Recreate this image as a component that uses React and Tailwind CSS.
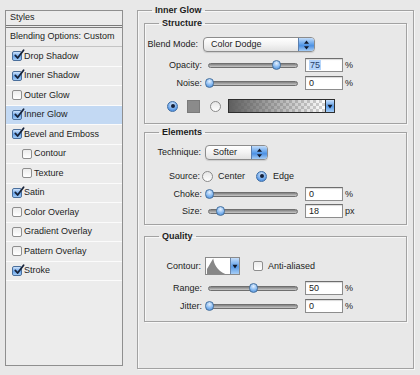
import React from "react";

const FONT = "font-['Liberation_Sans',Arial,Helvetica,sans-serif]";

function CheckBox({ checked }) {
  if (checked)
    return (
      <span className="relative block shrink-0 w-[10px] h-[10px] rounded-[2px] border border-[#4a6f9c] bg-[linear-gradient(#cfe3fb,#6aa6ec_55%,#a3ccf6)]">
        <svg className="absolute left-[0px] top-[-3px]" width="12" height="12" viewBox="0 0 12 12">
          <path d="M2.3 6.4 L4.6 9 L10.6 1.3" fill="none" stroke="#17233a" strokeWidth="1.8" strokeLinecap="round" strokeLinejoin="round" />
        </svg>
      </span>
    );
  return <span className="block shrink-0 w-[10px] h-[10px] rounded-[2px] border border-[#8e8e8e] bg-[linear-gradient(#ececec,#ffffff)]" />;
}

function Radio({ on }) {
  if (on)
    return (
      <span className="shrink-0 w-[11px] h-[11px] rounded-full border border-[#3f6ea5] bg-[radial-gradient(circle_at_50%_30%,#d6e9fd,#5b9ae6_70%,#3f7fcf)] flex items-center justify-center">
        <span className="block w-[4px] h-[4px] rounded-full bg-[#13203a]" />
      </span>
    );
  return <span className="block shrink-0 w-[11px] h-[11px] rounded-full border border-[#8a8a8a] bg-[linear-gradient(#e6e6e6,#ffffff)]" />;
}

function Stepper() {
  return (
    <svg width="7" height="10" viewBox="0 0 7 10">
      <path d="M3.5 0.5 L6 3.8 L1 3.8 Z" fill="#10182a" />
      <path d="M3.5 9.5 L6 6.2 L1 6.2 Z" fill="#10182a" />
    </svg>
  );
}

function DownArrow() {
  return (
    <svg width="6" height="5" viewBox="0 0 6 5">
      <path d="M0.5 0.8 L5.5 0.8 L3 4.5 Z" fill="#10182a" />
    </svg>
  );
}

function Popup({ wClass, text }) {
  return (
    <div className={"h-[15px] rounded-[4px] border border-[#8c8c8c] bg-[linear-gradient(#ffffff,#f3f3f3_50%,#e2e2e2)] flex items-center shadow-[0_1px_1px_rgba(0,0,0,0.12)] overflow-hidden " + wClass}>
      <span className="pl-[7px] leading-none">{text}</span>
      <div className="ml-auto h-full w-[16px] border-l border-[#5b7fae] bg-[linear-gradient(#c2dcfa,#5c9ee9_50%,#4d90e2_60%,#a6cdf5)] flex items-center justify-center">
        <Stepper />
      </div>
    </div>
  );
}

function Slider({ pos }) {
  return (
    <div className="relative ml-[6px] w-[90px] h-[10px] flex items-center">
      <div className="w-full h-[5px] rounded-full border border-[#6f6f6f] bg-[linear-gradient(#808080,#c9c9c9)]" />
      <div
        className="absolute top-[0px] w-[9px] h-[10px] rounded-full border border-[#44709f] bg-[radial-gradient(circle_at_50%_30%,#e4f0fe,#7db3ee_60%,#4e8ad3)]"
        style={{ left: pos - 4.5 }}
      />
    </div>
  );
}

function Field({ value, selected }) {
  return (
    <div className="ml-[7px] w-[38px] h-[14px] bg-white border border-[#8d8d8d] border-t-[#6e6e6e] flex items-center pl-[3px] shadow-[inset_0_1px_1px_rgba(0,0,0,0.15)]">
      {selected ? <span className="bg-[#b5d4fa] leading-[10px] px-[1px] text-[#2a3f6a]">{value}</span> : <span className="leading-none">{value}</span>}
    </div>
  );
}

function SliderRow({ label, pos, value, unit, selected, mt }) {
  return (
    <div className={"flex items-center h-[14px] " + mt}>
      <span className="w-[57px] text-right leading-none">{label}</span>
      <Slider pos={pos} />
      <Field value={value} selected={selected} />
      <span className="ml-[2px] leading-none">{unit}</span>
    </div>
  );
}

function Group({ title, className, children }) {
  return (
    <fieldset className={"border border-[#a2a2a2] shadow-[inset_1px_1px_0_#f7f7f7,1px_1px_0_#f7f7f7] " + className}>
      <legend className="ml-[14px] px-[3px] font-bold leading-[10px]">{title}</legend>
      {children}
    </fieldset>
  );
}

const items = [
  { t: "Drop Shadow", c: true },
  { t: "Inner Shadow", c: true },
  { t: "Outer Glow", c: false },
  { t: "Inner Glow", c: true, sel: true },
  { t: "Bevel and Emboss", c: true },
  { t: "Contour", c: false, ind: true },
  { t: "Texture", c: false, ind: true },
  { t: "Satin", c: true },
  { t: "Color Overlay", c: false },
  { t: "Gradient Overlay", c: false },
  { t: "Pattern Overlay", c: false },
  { t: "Stroke", c: true },
];

export default function App() {
  return (
    <div className={"w-[420px] h-[375px] bg-[#e8e8e8] flex items-start text-[9px] text-[#1c1c1c] overflow-hidden " + FONT}>
      {/* Left styles list */}
      <div className="ml-[5px] mt-[10px] w-[118px] h-[356px] border border-[#8f8f8f] bg-[#ececec] flex flex-col">
        <div className="h-[17px] shrink-0 pl-[4px] flex items-center border-b-[3px] border-double border-[#7a7a7a]">Styles</div>
        <div className="h-[19px] shrink-0 pl-[4px] flex items-center border-b border-[#c4c4c4]">Blending Options: Custom</div>
        {items.map((it) => (
          <div
            key={it.t}
            className={
              "h-[19.5px] shrink-0 flex items-center gap-[2px] border-b border-[#fbfbfb] " +
              (it.ind ? "pl-[16px] " : "pl-[6px] ") +
              (it.sel ? "bg-[#c3d9f3]" : "")
            }
          >
            <CheckBox checked={it.c} />
            <span className="leading-none">{it.t}</span>
          </div>
        ))}
      </div>

      {/* Right panel */}
      <Group title="Inner Glow" className="ml-[14px] mt-[5px] w-[277px] h-[364px]">
        <Group title="Structure" className="mx-[6px] mt-[3px] pb-[10px]">
          <div className="mt-[9px] flex items-center h-[15px]">
            <span className="w-[53px] text-right leading-none">Blend Mode:</span>
            <div className="ml-[5px]">
              <Popup wClass="w-[112px]" text="Color Dodge" />
            </div>
          </div>
          <SliderRow label="Opacity:" pos={68} value="75" unit="%" selected mt="mt-[6px]" />
          <SliderRow label="Noise:" pos={1} value="0" unit="%" mt="mt-[4px]" />
          <div className="mt-[9px] flex items-center h-[14px] pl-[22px]">
            <Radio on />
            <span className="block ml-[9px] w-[13px] h-[13px] bg-[#8b8b8b] border border-[#7a7a7a]" />
            <span className="ml-[10px]"><Radio /></span>
            <div className="ml-[7px] w-[107px] h-[14px] border border-[#2e2e2e] flex">
              <div className="flex-1 bg-[repeating-conic-gradient(#ffffff_0_25%,#d2d2d2_0_50%)] bg-[length:6px_6px] flex">
                <div className="flex-1 bg-[linear-gradient(to_right,#5e5e5e,rgba(94,94,94,0.55)_45%,rgba(94,94,94,0))]" />
              </div>
              <div className="w-[9px] border-l border-[#2e2e2e] bg-[linear-gradient(#c6defa,#5a9ce8_55%,#a6cdf5)] flex items-center justify-center">
                <DownArrow />
              </div>
            </div>
          </div>
        </Group>

        <Group title="Elements" className="mx-[6px] mt-[3px] pb-[6px]">
          <div className="mt-[8px] flex items-center h-[15px]">
            <span className="w-[56px] text-right leading-none">Technique:</span>
            <div className="ml-[4px]">
              <Popup wClass="w-[63px]" text="Softer" />
            </div>
          </div>
          <div className="mt-[10px] flex items-center h-[12px]">
            <span className="w-[55px] text-right leading-none">Source:</span>
            <span className="ml-[2px]"><Radio /></span>
            <span className="ml-[5px] leading-none">Center</span>
            <span className="ml-[11px]"><Radio on /></span>
            <span className="ml-[6px] leading-none">Edge</span>
          </div>
          <SliderRow label="Choke:" pos={1} value="0" unit="%" mt="mt-[5px]" />
          <SliderRow label="Size:" pos={12} value="18" unit="px" mt="mt-[3px]" />
        </Group>

        <Group title="Quality" className="mx-[6px] mt-[6px] pb-[8px]">
          <div className="mt-[16px] flex items-center h-[18px]">
            <span className="w-[56px] text-right leading-none">Contour:</span>
            <div className="ml-[4px] w-[35px] h-[18px] border border-[#8a8a8a] bg-white flex">
              <svg className="flex-1" height="16" viewBox="0 0 25 16" preserveAspectRatio="none">
                <path d="M1 16 L1 11 C3 8 6 3 7.5 0.5 C8.5 6 11 12 20 16 Z" fill="#878787" />
              </svg>
              <div className="w-[9px] border-l border-[#6c87ab] bg-[linear-gradient(#c6defa,#5a9ce8_55%,#a6cdf5)] flex items-center justify-center">
                <DownArrow />
              </div>
            </div>
            <span className="ml-[13px]"><CheckBox checked={false} /></span>
            <span className="ml-[5px] leading-none">Anti-aliased</span>
          </div>
          <SliderRow label="Range:" pos={45} value="50" unit="%" mt="mt-[6px]" />
          <SliderRow label="Jitter:" pos={1} value="0" unit="%" mt="mt-[4px]" />
        </Group>
      </Group>
    </div>
  );
}
